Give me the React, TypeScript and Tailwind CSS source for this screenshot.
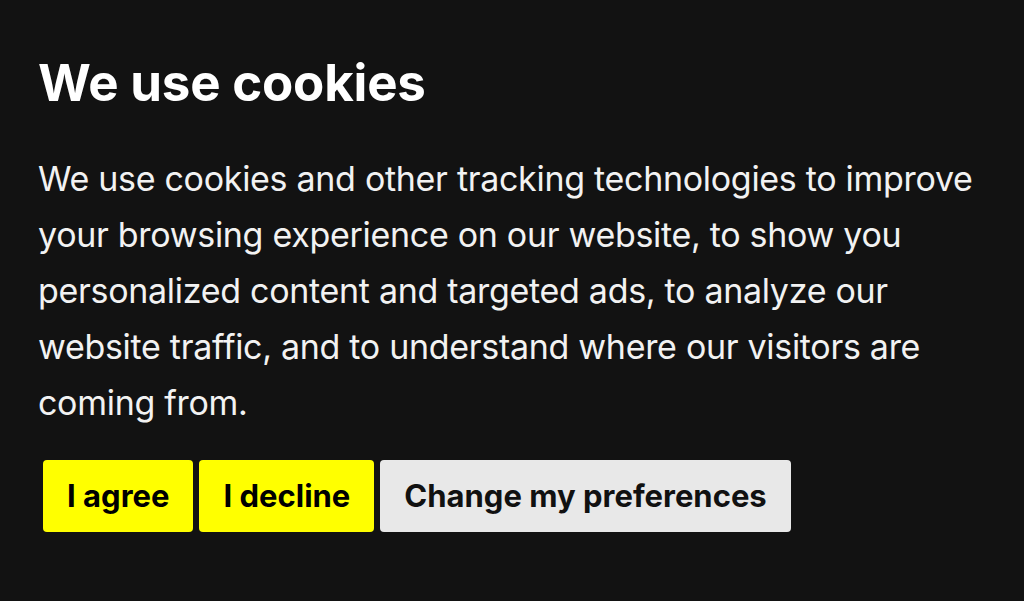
export default function App() {
  return (
    <div className="min-h-[601px] w-full bg-[#121212] text-white font-['Inter','Liberation_Sans',sans-serif]">
      <div className="pl-[38px] pr-[30px] pt-[53px]">
        {/* Heading */}
        <h1 className="text-[51px] leading-[60px] font-bold tracking-[-0.2px]">We use cookies</h1>

        {/* Body */}
        <p className="mt-[38px] text-[34px] leading-[56px] tracking-[-0.3px] text-[#f2f2f2] max-w-[950px]">
          We use cookies and other tracking technologies to improve your browsing experience on our
          website, to show you personalized content and targeted ads, to analyze our website traffic,
          and to understand where our visitors are coming from.
        </p>

        {/* Actions */}
        <div className="mt-[29px] flex items-center gap-[6px] pl-[5px]">
          <button className="h-[72px] px-[24px] rounded-[4px] bg-[#ffff00] text-black text-[31px] font-bold">
            I agree
          </button>
          <button className="h-[72px] px-[24px] rounded-[4px] bg-[#ffff00] text-black text-[31px] font-bold">
            I decline
          </button>
          <button className="h-[72px] px-[24px] rounded-[4px] bg-[#e8e8e8] text-[#111111] text-[31px] font-bold">
            Change my preferences
          </button>
        </div>
      </div>
    </div>
  )
}
